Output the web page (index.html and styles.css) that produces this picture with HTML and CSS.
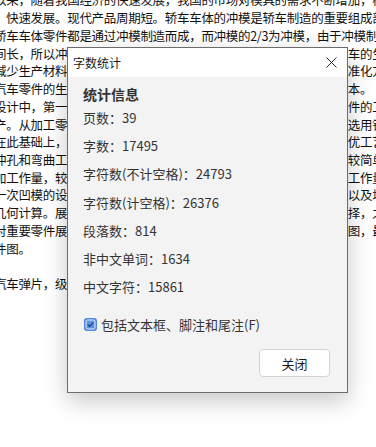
FILE: index.html
```html
<!DOCTYPE html>
<html lang="zh-CN">
<head>
<meta charset="utf-8">
<title>字数统计</title>
<link rel="stylesheet" href="styles.css">
</head>
<body>
<div class="doc">
  <div class="line">以来，随着我国经济的快速发展，我国的市场对模具的需求不断增加，模具</div>
  <div class="line">　快速发展。现代产品周期短。轿车车体的冲模是轿车制造的重要组成部分</div>
  <div class="line">轿车车体零件都是通过冲模制造而成，而冲模的2/3为冲模，由于冲模制造周期</div>
  <div class="line">间长，所以冲模的设计制造水平直接影响着新产品的开发周期和轿车的生产效率</div>
  <div class="line">减少生产材料的消耗，降低生产成本，逐步实现冲压模具设计的标准化方向</div>
  <div class="line">汽车零件的生产效率，提高产品的质量和精度，从而降低了生产成本。</div>
  <div class="line">设计中，第一步是对所要加工零件进行工艺性分析，并确定冲压零件的工艺</div>
  <div class="line">产。从加工零件的形状、尺寸、精度要求和材料性能等方面分析，选用钢板</div>
  <div class="line">在此基础上，对各种可能的冲压工艺方案进行分析和比较，确定最优工艺方案</div>
  <div class="line">冲孔和弯曲工艺，其中落料和冲孔工艺相对简单，而弯曲工艺也比较简单。</div>
  <div class="line">加工作量，较少的工序可以减少模具的数量，减少模具设计和制造工作量。大批量</div>
  <div class="line">一次凹模的设计包括凸凹模间隙、刃口尺寸、压力中心的确定计算以及坯料尺寸</div>
  <div class="line">几何计算。展开图的绘制和排样方式分析，根据材料利用率进行选择，之后</div>
  <div class="line">对重要零件展开详细的结构设计，绘制出模具总装配图和主要零件图，最后</div>
  <div class="line">件图。</div>
  <div class="line">&nbsp;</div>
  <div class="line">汽车弹片，级进模设计</div>
</div>

<div class="dialog" role="dialog" aria-label="字数统计">
  <div class="titlebar">
    <span class="title">字数统计</span>
    <svg class="close" width="11" height="11" viewBox="0 0 11 11" aria-hidden="true">
      <path d="M0.5 0.5 L10.5 10.5 M10.5 0.5 L0.5 10.5" stroke="#2b2b2b" stroke-width="1" fill="none"/>
    </svg>
  </div>
  <div class="body">
    <div class="heading">统计信息</div>
    <div class="stats">
      <div class="stat">页数：39</div>
      <div class="stat">字数：17495</div>
      <div class="stat">字符数(不计空格)：24793</div>
      <div class="stat">字符数(计空格)：26376</div>
      <div class="stat">段落数：814</div>
      <div class="stat">非中文单词：1634</div>
      <div class="stat">中文字符：15861</div>
    </div>
    <label class="check">
      <svg class="box" width="13" height="13" viewBox="0 0 13 13" aria-hidden="true">
        <rect x="0" y="0" width="13" height="13" rx="3" fill="#4f86d8"/>
        <rect x="2" y="2" width="9" height="9" rx="1.5" fill="#5d92e0" stroke="#e6efff" stroke-width="1"/>
        <path d="M3.8 6.6 L5.7 8.4 L9.2 4.6" stroke="#1c3f80" stroke-width="1.3" fill="none"/>
      </svg>
      <span>包括文本框、脚注和尾注(F)</span>
    </label>
    <div class="footer">
      <button class="btn" type="button">关闭</button>
    </div>
  </div>
</div>
</body>
</html>
```

FILE: styles.css
```css
html, body {
  margin: 0;
  padding: 0;
  overflow: hidden;
  background: #ffffff;
  width: 376px;
  height: 447px;
}

.doc {
  margin: -8.6px 0 0 -6px;
  font-family: "Noto Sans CJK SC", "Noto Sans", sans-serif;
  font-size: 12.5px;
  letter-spacing: -0.3px;
  line-height: 17.73px;
  color: #111111;
  white-space: nowrap;
}

.dialog {
  position: absolute;
  left: 67px;
  top: 47px;
  width: 281px;
  height: 346px;
  box-sizing: border-box;
  border: 1px solid #6c6c6c;
  background: #f3f3f3;
  box-shadow: 0 8px 22px rgba(0, 0, 0, 0.22);
  display: flex;
  flex-direction: column;
  font-family: "Noto Sans CJK SC", "Noto Sans", sans-serif;
}

.titlebar {
  height: 29px;
  background: #ffffff;
  display: flex;
  align-items: center;
  justify-content: space-between;
  padding: 0 10px 0 5px;
  flex-shrink: 0;
}

.title {
  font-size: 12px;
  color: #1a1a1a;
  line-height: 16px;
}

.close {
  display: block;
}

.body {
  flex: 1;
  display: flex;
  flex-direction: column;
  padding: 7px 17px 15px 15px;
}

.heading {
  font-size: 14px;
  font-weight: bold;
  color: #333333;
  line-height: 20px;
}

.stats {
  display: flex;
  flex-direction: column;
}

.stat {
  font-size: 13px;
  color: #333333;
  line-height: 28.23px;
  height: 28.23px;
}

.check {
  display: flex;
  align-items: center;
  gap: 4px;
  margin-top: 12.5px;
  height: 20px;
  font-size: 13px;
  color: #333333;
  padding-left: 1px;
}

.box {
  display: block;
  flex-shrink: 0;
}

.footer {
  margin-top: auto;
  display: flex;
  justify-content: flex-end;
}

.btn {
  width: 71px;
  height: 28px;
  box-sizing: border-box;
  background: #ffffff;
  border: 1px solid #d3d3d3;
  border-radius: 4px;
  font-family: "Noto Sans CJK SC", "Noto Sans", sans-serif;
  font-size: 13px;
  color: #1a1a1a;
  padding: 0;
}
```
